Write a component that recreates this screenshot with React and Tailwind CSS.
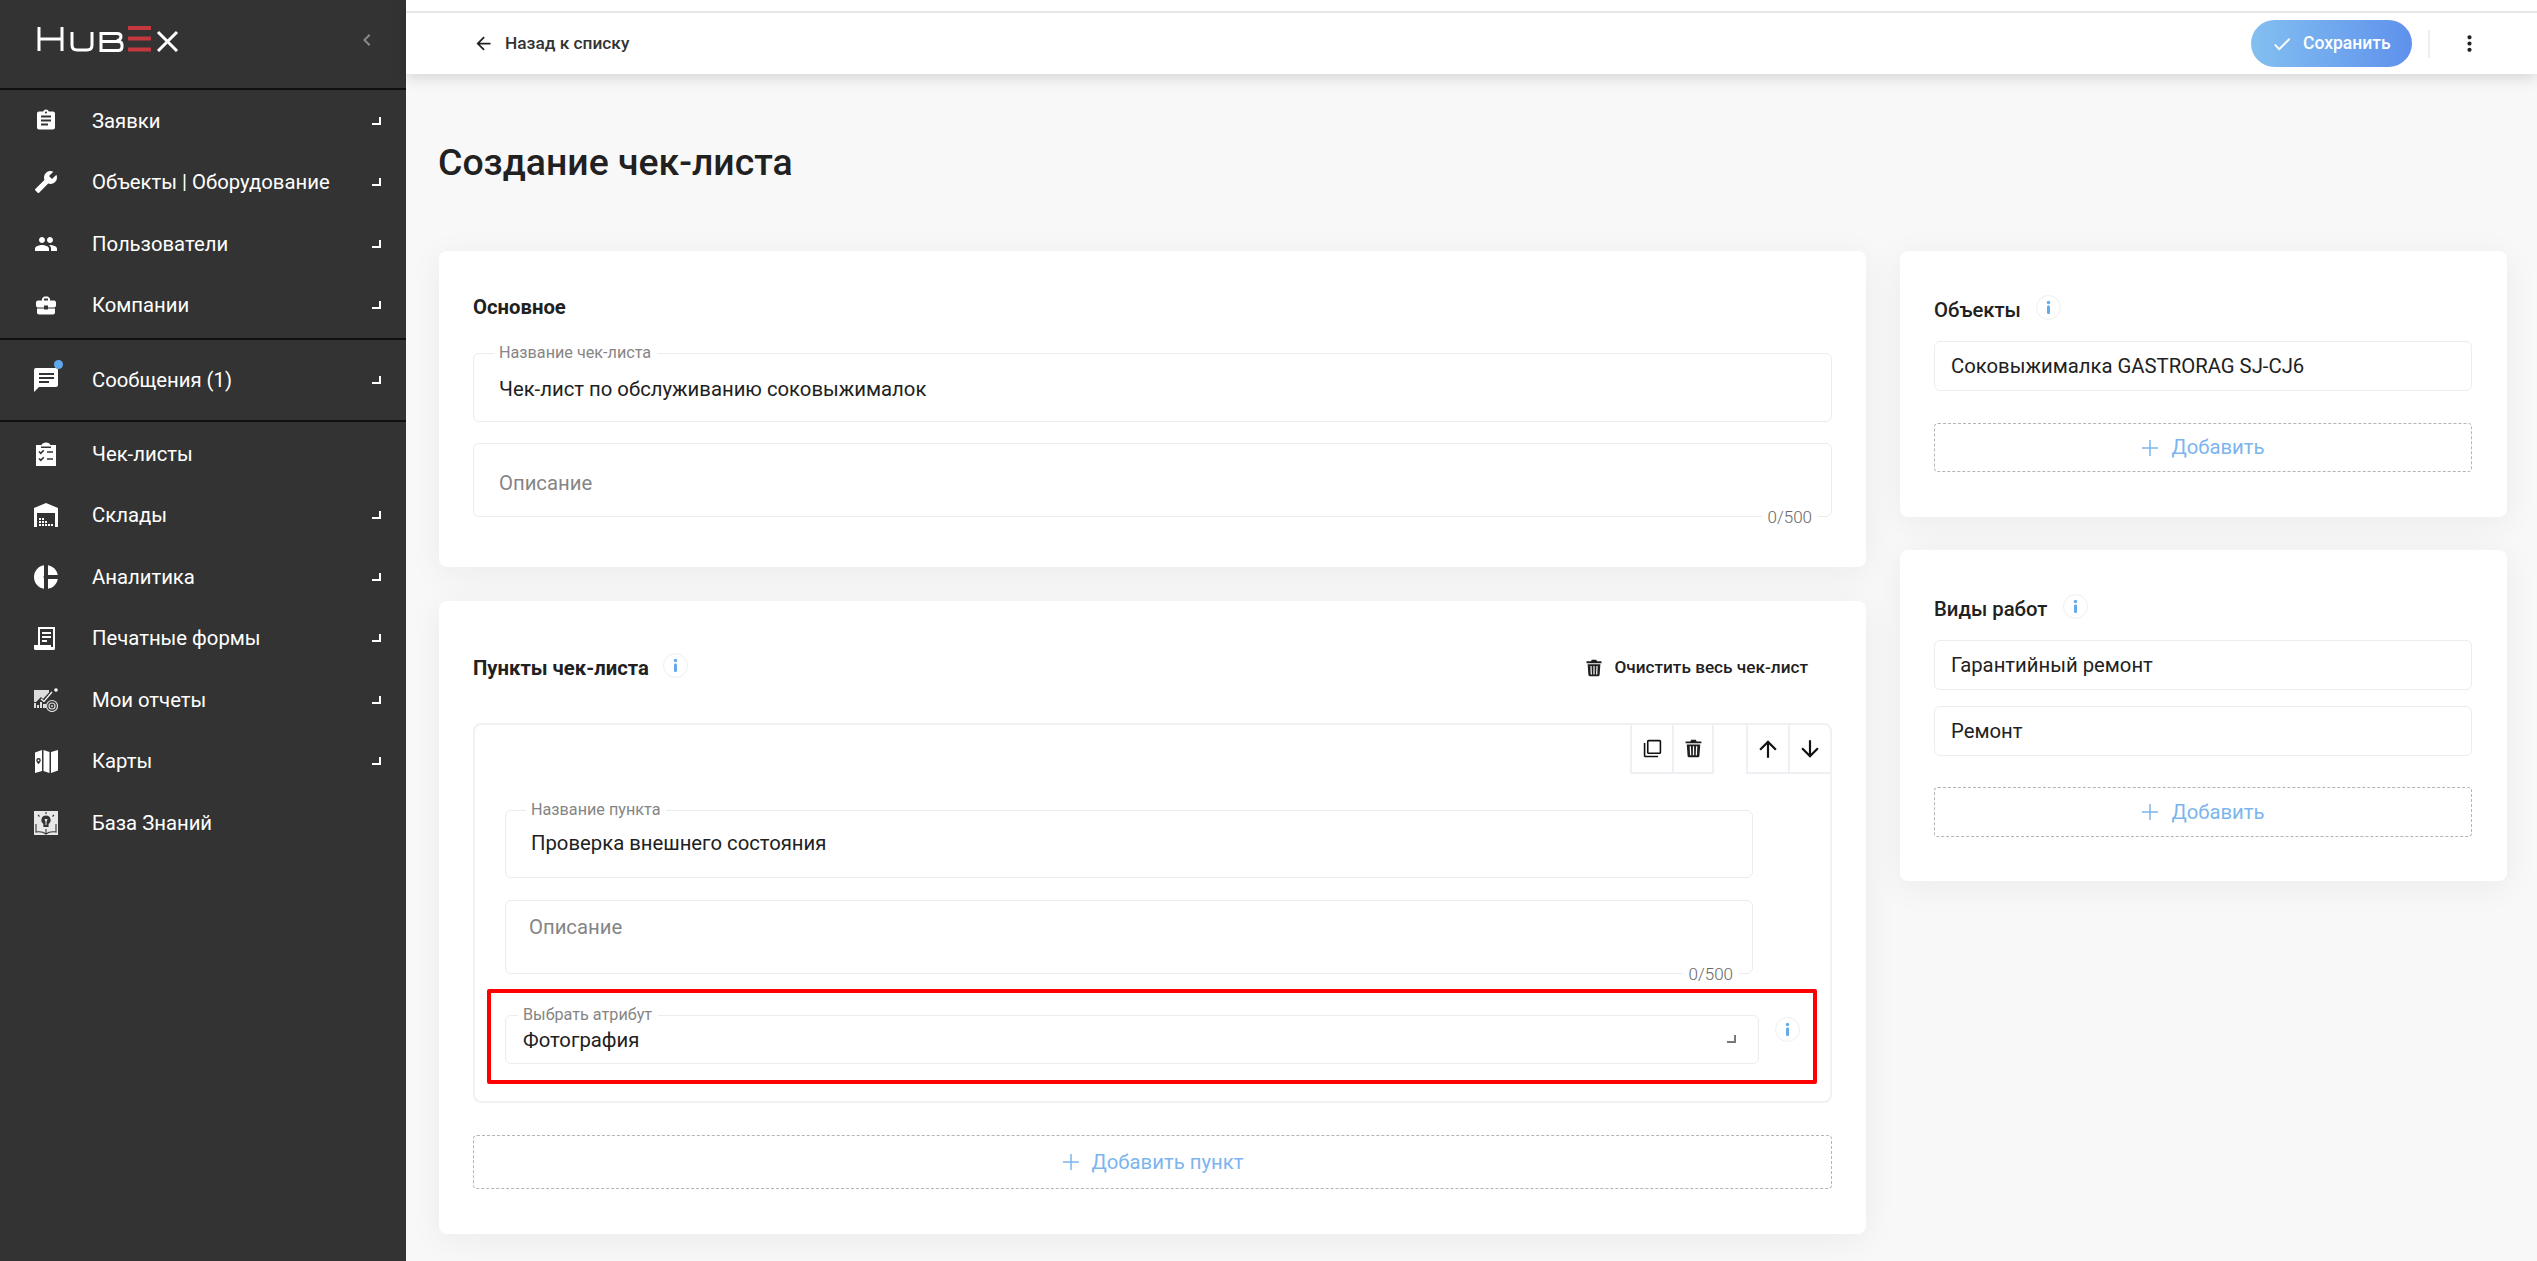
import React from "react";
import {
  MdArrowBack,
  MdArrowDownward,
  MdArrowUpward,
  MdAssignment,
  MdBuild,
  MdBusinessCenter,
  MdCheck,
  MdChevronLeft,
  MdMoreVert,
  MdOutlineFilterNone,
  MdPeople,
} from "react-icons/md";

const Logo = () => (
  <svg width="142" height="26" viewBox="0 0 142 26" className="block">
    <g stroke="#fff" strokeWidth="3" fill="none">
      <path d="M2 1v24M25 1v24M2 13h23" />
      <path d="M35 6v13q0 5 5 5h10q5 0 5-5V6" />
      <path d="M64 6v18.500h17q4 0 4-3.500v-2q0-3.500-4-3.500H64M64 7.500h16q4 0 4 3t-4 4.500" />
      <path d="M121 6l19 19M140 6l-19 19" />
    </g>
    <path d="M91 0h23v4H91zM91 10.500h23v4H91zM91 21.500h23v4H91z" fill="#c5383d" />
  </svg>
);

const ChecklistIcon = () => (
  <svg width="24" height="24" viewBox="0 0 24 24">
    <path fill="#fff" d="M2 3h5.500c.5-1.500 2.300-2.600 4.500-2.600s4 1.100 4.500 2.600H22v21H2z" />
    <path stroke="#333" strokeWidth="1.600" fill="none" d="M5 9.500l1.800 1.800 3-3M5 16.500l1.800 1.800 3-3M13 10h6M13 17h6M7 5.200h10" />
  </svg>
);

const WarehouseIcon = () => (
  <svg width="24" height="24" viewBox="0 0 24 24">
    <path fill="#fff" d="M0 24V5l12-5 12 5v19h-3V10H3v14z" />
    <path fill="#fff" d="M5 15h2v2H5zM8 15h2v2H8zM5 18h2v2H5zM8 18h2v2H8zM11 18h2v2h-2zM5 21h2v2H5zM8 21h2v2H8zM11 21h2v2h-2zM14 21h2v2h-2zM17 21h2v2h-2z" />
  </svg>
);

const PieIcon = () => (
  <svg width="24" height="24" viewBox="0 0 24 24">
    <path fill="#fff" d="M10 .200v23.600C4.300 23 0 18 0 12S4.300 1 10 .200zM14 .200C19 1 23 5 23.800 10H14zM14 14h9.800C23 19 19 23 14 23.800z" />
    <circle cx="11.500" cy="12" r="2" fill="#333" />
  </svg>
);

const PrintIcon = () => (
  <svg width="24" height="24" viewBox="0 0 24 24">
    <path fill="#fff" d="M4 1h17v21.500c0 .8-.6 1.500-1.500 1.500H1.500C.6 24 0 23.300 0 22.500V19h4zM6 3v16h11v2h2V3z" />
    <path fill="#fff" d="M8 6h9v2H8zM8 10h9v2H8zM8 14h5v2H8z" />
  </svg>
);

const ReportIcon = () => (
  <svg width="24" height="24" viewBox="0 0 24 24">
    <path fill="#ddd" d="M0 2h15v2.500L9 11 7 9l-5 5H0zM0 15h2v5H0zM3 17h2v3H3zM6 14h2v6H6zM9 16h3v4H9z" />
    <path stroke="#fff" strokeWidth="1.200" fill="none" d="M7 11l3 2.500 8-9.500" />
    <circle cx="22" cy="2" r="1.800" fill="#fff" />
    <circle cx="18" cy="18" r="5.500" stroke="#ddd" strokeWidth="1.200" fill="none" />
    <circle cx="18" cy="18" r="3" stroke="#ddd" strokeWidth="1.200" fill="none" />
    <circle cx="18" cy="18" r="1" fill="#ddd" />
  </svg>
);

const MapIcon = () => (
  <svg width="24" height="24" viewBox="0 0 24 24">
    <path fill="#fff" d="M1 3.500L8 1v21l-7 2zM9.500 1l6 2v21l-6-2zM17 3l7-2v20.500L17 24z" />
    <path fill="#333" d="M4.500 9a2.300 2.300 0 0 1 2.300 2.300c0 1.700-2.300 4-2.300 4s-2.300-2.300-2.300-4A2.300 2.300 0 0 1 4.500 9z" />
    <circle cx="4.500" cy="11.300" r=".9" fill="#fff" />
  </svg>
);

const KnowledgeIcon = () => (
  <svg width="24" height="24" viewBox="0 0 24 24">
    <path fill="#e8e8e8" d="M0 0h24v24H0z" />
    <path stroke="#333" strokeWidth="1.100" fill="none" d="M2 13v8c4-.6 7.500 0 10 2 2.500-2 6-2.600 10-2v-8M12 18v5M4 4l1.500 1.500M20 4l-1.500 1.500M12 1v2" />
    <path fill="#333" d="M12 4.500a4.600 4.600 0 0 0-2.600 8.400V16h5.200v-3.100A4.600 4.600 0 0 0 12 4.500z" />
    <path fill="#e8e8e8" d="M10.500 8h3l-1 3v3h-1v-3z" />
  </svg>
);

const TrashIcon = ({ size = 18 }) => (
  <svg width={size} height={size} viewBox="0 0 24 24" fill="#1f1f1f">
    <path d="M9 1h6l1 2h6v2.500H2V3h6z" />
    <path d="M3.500 7h17L19.500 21c-.1 1.300-1.200 2-2.500 2H7c-1.300 0-2.400-.7-2.500-2zM7.200 9.200l.4 11.300h1.600L8.800 9.200zM11.200 9.200v11.300h1.600V9.200zM15.200 9.200l-.4 11.300h1.600l.4-11.300z" fillRule="evenodd" />
  </svg>
);

const InfoDot = () => (
  <svg width="25" height="25" viewBox="0 0 25 25" className="block shrink-0">
    <circle cx="12.500" cy="12.500" r="12" fill="#fff" stroke="#eeeeee" />
    <circle cx="12.500" cy="7.500" r="1.700" fill="#63a9ec" />
    <rect x="11" y="10.500" width="3" height="8.500" rx="1.200" fill="#63a9ec" />
  </svg>
);

const Corner = ({ light }) => (
  <span
    className={
      light
        ? "block w-[9px] h-[8px] border-r-2 border-b-2 border-white"
        : "block w-[9px] h-[8px] border-r-2 border-b-2 border-[#777777]"
    }
  />
);

const NavItem = ({ icon, label, arrow = true, dot = false, tall = false }) => (
  <div className={tall ? "flex items-center h-[80px] pl-[34px] pr-[25px]" : "flex items-center h-[61.5px] pl-[34px] pr-[25px]"}>
    <span className="relative w-[24px] h-[24px] flex items-center justify-center text-white shrink-0">
      {icon}
      {dot && <span className="absolute right-[-5px] top-[-8px] w-[9px] h-[9px] rounded-full bg-[#5fa8ee]" />}
    </span>
    <span className="ml-[34px] flex-1 text-[20.3px] leading-[24px] text-white">{label}</span>
    {arrow && <Corner light />}
  </div>
);

const Sidebar = () => (
  <aside className="w-[406px] shrink-0 h-full bg-[#333333]">
    <div className="h-[90px] border-b-2 border-[#111111] flex items-center pl-[37px] pr-[27px] pb-[10px] justify-between">
      <Logo />
      <MdChevronLeft size={24} className="text-[#8a8a8a] mt-[1px]" />
    </div>
    <div className="border-b-2 border-[#111111] pb-[2px]">
      <NavItem icon={<MdAssignment size={29} />} label="Заявки" />
      <NavItem icon={<MdBuild size={28} className="-scale-x-100" />} label="Объекты | Оборудование" />
      <NavItem icon={<MdPeople size={28} />} label="Пользователи" />
      <NavItem icon={<MdBusinessCenter size={29} />} label="Компании" />
    </div>
    <div className="border-b-2 border-[#111111]">
      <NavItem
        tall
        dot
        label="Сообщения (1)"
        icon={
          <svg width="24" height="24" viewBox="0 0 24 24" fill="#fff">
            <path fillRule="evenodd" d="M2 0h20a2 2 0 0 1 2 2v15a2 2 0 0 1-2 2H5l-5 5V2a2 2 0 0 1 2-2zM5 5v2h15V5zM5 9v2h15V9zM5 13v2h10v-2z" />
          </svg>
        }
      />
    </div>
    <div className="pt-[1px]">
      <NavItem icon={<ChecklistIcon />} label="Чек-листы" arrow={false} />
      <NavItem icon={<WarehouseIcon />} label="Склады" />
      <NavItem icon={<PieIcon />} label="Аналитика" />
      <NavItem icon={<PrintIcon />} label="Печатные формы" />
      <NavItem icon={<ReportIcon />} label="Мои отчеты" />
      <NavItem icon={<MapIcon />} label="Карты" />
      <NavItem icon={<KnowledgeIcon />} label="База Знаний" arrow={false} />
    </div>
  </aside>
);

const Field = ({ label, value, placeholder, counter, corner, className, labelLeft = "left-[20px]", textLeft = "pl-[25px]" }) => (
  <div className={"relative border border-[#ececec] rounded-[6px] bg-white flex items-center " + textLeft + " " + className}>
    {label && (
      <span className={"absolute top-[-10px] bg-white pr-[6px] pl-[5px] text-[16.2px] leading-[18px] text-[#858585] " + labelLeft}>{label}</span>
    )}
    {value && <span className="text-[20.3px] leading-[24px] text-[#212121]">{value}</span>}
    {placeholder && <span className="text-[20.3px] leading-[24px] text-[#858585]">{placeholder}</span>}
    {counter && (
      <span className="absolute right-[13px] bottom-[-10px] bg-white px-[6px] text-[17px] font-light leading-[18px] text-[#666666]">{counter}</span>
    )}
    {corner && (
      <span className="absolute right-[22px] top-[19px]">
        <Corner />
      </span>
    )}
  </div>
);

const AddButton = ({ label, className }) => (
  <div className={"flex items-center justify-center gap-[12px] border border-dashed border-[#b5b5b5] rounded-[4px] text-[#7cb5ee] text-[20.3px] " + className}>
    <svg width="18" height="18" viewBox="0 0 18 18" stroke="#7cb5ee" strokeWidth="1.500">
      <path d="M9 1v16M1 9h16" />
    </svg>
    {label}
  </div>
);

const Card = ({ children, className }) => (
  <section className={"bg-white rounded-[8px] shadow-[0_6px_34px_rgba(40,40,60,0.06)] " + className}>{children}</section>
);

const IconTab = ({ children, className = "" }) => (
  <div className={"w-[42px] h-[49px] flex items-center justify-center border-l-2 border-b-2 border-[#eef0f3] text-[#111111] " + className}>
    {children}
  </div>
);

const App = () => {
  return (
    <div className="flex w-full h-screen overflow-hidden bg-[#f8f8f8] font-['Roboto',sans-serif]">
      <Sidebar />
      <main className="flex-1 min-w-0">
        <header className="h-[74px] bg-white shadow-[0_4px_14px_rgba(0,0,0,0.14)] pt-[11px]">
          <div className="h-full border-t-2 border-[#e8e8e8] flex items-center pl-[67px] pr-[55px]">
            <MdArrowBack size={21} className="text-[#212121]" />
            <span className="ml-[11px] flex-1 text-[17.3px] font-medium text-[#333333]">Назад к списку</span>
            <div className="w-[161px] h-[47px] rounded-full bg-gradient-to-r from-[#84bff0] to-[#5f91ec] flex items-center pl-[20px] gap-[10px] text-white text-[17.5px] font-medium">
              <MdCheck size={22} />
              Сохранить
            </div>
            <span className="ml-[16px] w-[2px] h-[28px] bg-[#eeeeee]" />
            <MdMoreVert size={25} className="ml-[27px] text-[#212121]" />
          </div>
        </header>

        <div className="pl-[33px]">
          <h1 className="h-[177px] flex items-center -ml-[1px] text-[37.4px] font-medium text-[#212121]">Создание чек-листа</h1>

          <div className="flex items-start gap-[34px]">
            <div className="w-[1427px] flex flex-col gap-[34px]">
              <Card className="px-[34px] pt-[44px] pb-[50px]">
                <h2 className="text-[20.3px] leading-[24px] font-bold text-[#212121] mb-[34px]">Основное</h2>
                <Field className="h-[69px] pt-[2px]" label="Название чек-листа" value="Чек-лист по обслуживанию соковыжималок" />
                <Field className="h-[74px] mt-[21px] pt-[6px]" placeholder="Описание" counter="0/500" />
              </Card>

              <Card className="px-[34px] pt-[55px] pb-[45px]">
                <div className="flex items-center h-[24px] mb-[43px]">
                  <h2 className="text-[20.3px] leading-[24px] font-bold text-[#212121]">Пункты чек-листа</h2>
                  <span className="ml-[14px] -translate-y-[3px]"><InfoDot /></span>
                  <span className="ml-auto flex items-center gap-[11px] mr-[24px] text-[17.2px] font-medium text-[#212121]">
                    <TrashIcon size={18} />
                    Очистить весь чек-лист
                  </span>
                </div>

                <div className="border-2 border-[#f0f1f3] rounded-[8px] h-[380px]">
                  <div className="flex justify-end">
                    <IconTab><MdOutlineFilterNone size={19} /></IconTab>
                    <IconTab className="border-r-2"><TrashIcon size={19} /></IconTab>
                    <span className="w-[32px]" />
                    <IconTab><MdArrowUpward size={26} /></IconTab>
                    <IconTab><MdArrowDownward size={26} /></IconTab>
                  </div>
                  <div className="ml-[30px] w-[1248px] mt-[36px]">
                    <Field className="h-[68px] pb-[3px]" label="Название пункта" value="Проверка внешнего состояния" />
                    <Field className="h-[74px] mt-[22px] pb-[20px] !pl-[23px]" placeholder="Описание" counter="0/500" />
                  </div>
                  <div className="ml-[12px] mt-[15px] w-[1330px] h-[95px] border-[4px] border-[#ff0000] rounded-[2px] pl-[14px] pt-[22px] flex items-start">
                    <Field
                      className="w-[1254px] h-[49px] pt-[1px] !pl-[17px]"
                      labelLeft="left-[12px]"
                      label="Выбрать атрибут"
                      value="Фотография"
                      corner
                    />
                    <span className="ml-[16px] mt-[2px]"><InfoDot /></span>
                  </div>
                </div>

                <AddButton className="h-[54px] mt-[32px]" label="Добавить пункт" />
              </Card>
            </div>

            <div className="w-[607px] flex flex-col gap-[33px]">
              <Card className="pl-[34px] pr-[35px] pt-[47px] pb-[45px]">
                <div className="flex items-center h-[24px] mb-[19px]">
                  <h2 className="text-[20.3px] leading-[24px] font-medium text-[#212121]">Объекты</h2>
                  <span className="ml-[15px] -translate-y-[3px]"><InfoDot /></span>
                </div>
                <Field className="h-[50px] !pl-[16px]" value="Соковыжималка GASTRORAG SJ-CJ6" />
                <AddButton className="h-[49px] mt-[32px]" label="Добавить" />
              </Card>

              <Card className="pl-[34px] pr-[35px] pt-[47px] pb-[44px]">
                <div className="flex items-center h-[24px] mb-[19px]">
                  <h2 className="text-[20.3px] leading-[24px] font-medium text-[#212121]">Виды работ</h2>
                  <span className="ml-[16px] -translate-y-[3px]"><InfoDot /></span>
                </div>
                <Field className="h-[50px] !pl-[16px]" value="Гарантийный ремонт" />
                <Field className="h-[50px] mt-[16px] !pl-[16px]" value="Ремонт" />
                <AddButton className="h-[50px] mt-[31px]" label="Добавить" />
              </Card>
            </div>
          </div>
        </div>
      </main>
    </div>
  );
};

export default App;
